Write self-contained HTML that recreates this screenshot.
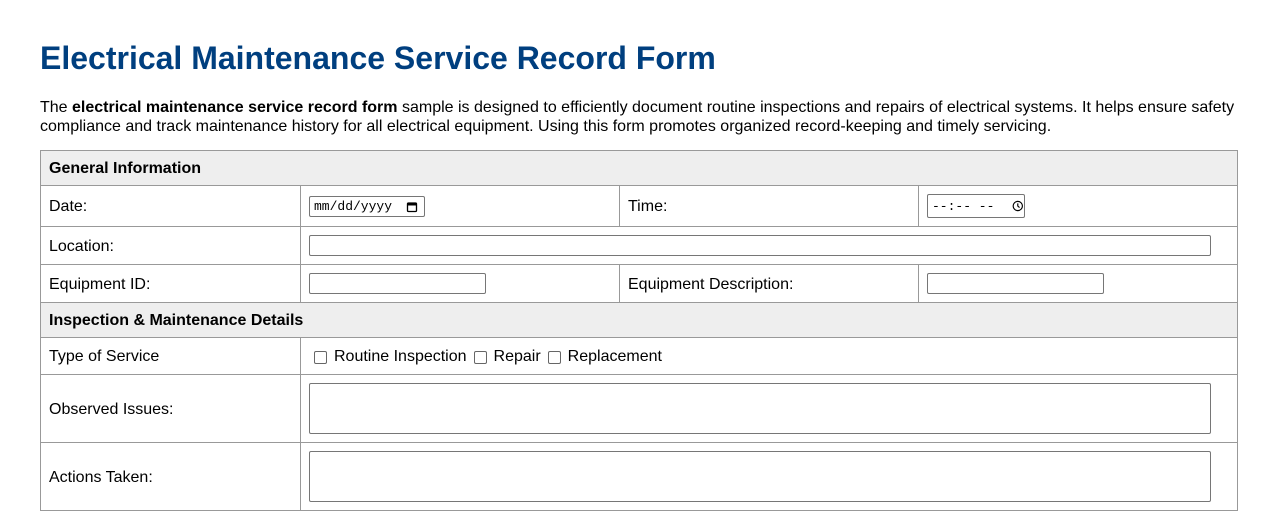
<!DOCTYPE html><html><head><style>
body{margin:0;background:#fff;font-family:"Liberation Sans",Arial,sans-serif;color:#000;width:1278px;height:501px;overflow:hidden;position:relative}
h1{position:absolute;left:40px;top:40px;margin:0;font-size:32px;color:#003f7f;font-weight:bold}
p{position:absolute;left:40px;top:98px;margin:0;font-size:16px;line-height:19px;width:1210px}
.c{position:absolute;border:1px solid #999;box-sizing:border-box;font-size:16px;display:flex;align-items:center;padding-left:8px;padding-top:2px}
.h{background:#eee;font-weight:bold}
.in{position:absolute;border:1px solid #767676;border-radius:2px;box-sizing:border-box;background:#fff;font-family:"Liberation Mono",monospace;font-size:13px;display:flex;align-items:center;padding-left:4px;white-space:nowrap}
.cb{display:inline-block;width:11px;height:11px;border:1px solid #666;border-radius:2px;margin:0 7px 0 7px;vertical-align:-1px}
</style></head><body>
<h1>Electrical Maintenance Service Record Form</h1>
<p>The <b>electrical maintenance service record form</b> sample is designed to efficiently document routine inspections and repairs of electrical systems. It helps ensure safety compliance and track maintenance history for all electrical equipment. Using this form promotes organized record-keeping and timely servicing.</p>
<div class="c h" style="left:40px;top:150px;width:1198px;height:36px">General Information</div>
<div class="c" style="left:40px;top:185px;width:261px;height:42px">Date:</div>
<div class="c" style="left:300px;top:185px;width:320px;height:42px"></div>
<div class="c" style="left:619px;top:185px;width:300px;height:42px">Time:</div>
<div class="c" style="left:918px;top:185px;width:320px;height:42px"></div>
<div class="c" style="left:40px;top:226px;width:261px;height:39px">Location:</div>
<div class="c" style="left:300px;top:226px;width:938px;height:39px"></div>
<div class="c" style="left:40px;top:264px;width:261px;height:39px">Equipment ID:</div>
<div class="c" style="left:300px;top:264px;width:320px;height:39px"></div>
<div class="c" style="left:619px;top:264px;width:300px;height:39px">Equipment Description:</div>
<div class="c" style="left:918px;top:264px;width:320px;height:39px"></div>
<div class="c h" style="left:40px;top:302px;width:1198px;height:36px">Inspection &amp; Maintenance Details</div>
<div class="c" style="left:40px;top:337px;width:261px;height:38px">Type of Service</div>
<div class="c" style="left:300px;top:337px;width:938px;height:38px"><span class="cb" style="margin-left:5px"></span>Routine Inspection<span class="cb"></span>Repair<span class="cb"></span>Replacement</div>
<div class="c" style="left:40px;top:374px;width:261px;height:69px">Observed Issues:</div>
<div class="c" style="left:300px;top:374px;width:938px;height:69px"></div>
<div class="c" style="left:40px;top:442px;width:261px;height:69px">Actions Taken:</div>
<div class="c" style="left:300px;top:442px;width:938px;height:69px"></div>
<div class="in" style="left:309px;top:196px;width:116px;height:21px">mm/dd/yyyy<svg style="margin-left:14px" width="12" height="12" viewBox="0 0 12 12"><rect x="1.5" y="2" width="9" height="8.5" rx="1" fill="none" stroke="#000" stroke-width="1.3"/><rect x="1.5" y="2" width="9" height="2.5" fill="#000"/></svg></div>
<div class="in" style="left:927px;top:194px;width:98px;height:24px"><span style="letter-spacing:0">--:-- --</span><svg style="margin-left:18px" width="12" height="12" viewBox="0 0 12 12"><circle cx="6" cy="6" r="4.8" fill="none" stroke="#000" stroke-width="1.2"/><path d="M6 3.3V6l1.8 1.6" fill="none" stroke="#000" stroke-width="1.2"/></svg></div>
<div class="in" style="left:309px;top:235px;width:902px;height:21px"></div>
<div class="in" style="left:309px;top:273px;width:177px;height:21px"></div>
<div class="in" style="left:927px;top:273px;width:177px;height:21px"></div>
<div class="in" style="left:309px;top:383px;width:902px;height:51px"></div>
<div class="in" style="left:309px;top:451px;width:902px;height:51px"></div>
</body></html>
